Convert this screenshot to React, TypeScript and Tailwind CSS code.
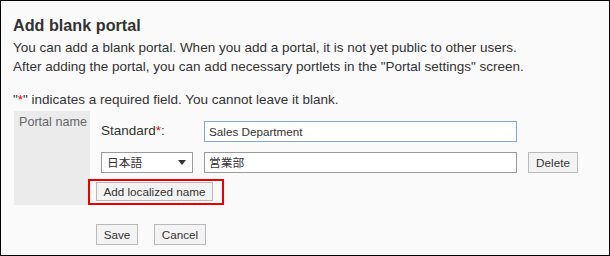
import React from "react";

const Btn = ({ children, className = "" }: { children: React.ReactNode; className?: string }) => (
  <button
    type="button"
    className={
      "border border-[#b9b9b9] bg-[#f3f3f3] text-[11.7px] text-[#333] px-[6px] leading-none whitespace-nowrap flex items-center justify-center " +
      className
    }
  >
    {children}
  </button>
);

export default function App() {
  return (
    <div className="w-[610px] h-[256px] border border-black bg-[#fafafa] text-[#333] font-['Liberation_Sans',Arial,sans-serif] overflow-hidden">
      <div className="pl-[12px] pt-[13px]">
        <h1 className="text-[16.2px] font-bold leading-[22px]">Add blank portal</h1>
        <p className="text-[13.5px] leading-[19px] mt-[2px]">
          You can add a blank portal. When you add a portal, it is not yet public to other users.
          <br />
          After adding the portal, you can add necessary portlets in the "Portal settings" screen.
        </p>
        <p className="text-[13.5px] leading-[19px] mt-[14px]">
          "<span className="text-[#e60000]">*</span>" indicates a required field. You cannot leave it blank.
        </p>
      </div>
      <div className="flex ml-[13px] mt-[2px]">
        <div className="w-[76px] bg-[#ebebeb] text-[12.6px] text-[#666] pl-[5px] pt-[3px] leading-[16px]">
          Portal name
        </div>
        <div className="pl-[6px] pt-[10px] pb-[4px]">
          <div className="flex items-center ml-[5px]">
            <div className="w-[103px] text-[13.5px]">
              Standard<span className="text-[#e60000]">*</span>:
            </div>
            <div className="w-[313px] h-[21px] border border-[#80a8d6] bg-white text-[11.7px] pl-[4px] flex items-center">
              Sales Department
            </div>
          </div>
          <div className="flex items-center ml-[5px] mt-[10px]">
            <div className="w-[92px] h-[21px] border border-[#9a9a9a] bg-white text-[11.7px] pl-[5px] pr-[5px] flex items-center justify-between font-['Liberation_Sans','Noto_Sans_CJK_JP',sans-serif]">
              <span>日本語</span>
              <svg width="8" height="5" viewBox="0 0 8 5" className="mr-[1px]">
                <path d="M0 0 L8 0 L4 5 Z" fill="#333" />
              </svg>
            </div>
            <div className="w-[313px] h-[21px] border border-[#9a9a9a] bg-white text-[11.7px] pl-[4px] ml-[11px] flex items-center font-['Liberation_Sans','Noto_Sans_CJK_JP',sans-serif]">
              営業部
            </div>
            <Btn className="h-[21px] ml-[11px] w-[50px]">Delete</Btn>
          </div>
          <div className="mt-[9px] relative w-fit">
            <Btn className="h-[19px] w-[117px]">Add localized name</Btn>
            <span className="absolute left-[-8px] right-[-11px] top-[-3px] bottom-[-4px] border-2 border-[#ee0000] pointer-events-none" />
          </div>
        </div>
      </div>
      <div className="flex gap-[16px] ml-[95px] mt-[19px]">
        <Btn className="h-[21px] w-[42px]">Save</Btn>
        <Btn className="h-[21px] w-[52px]">Cancel</Btn>
      </div>
    </div>
  );
}
